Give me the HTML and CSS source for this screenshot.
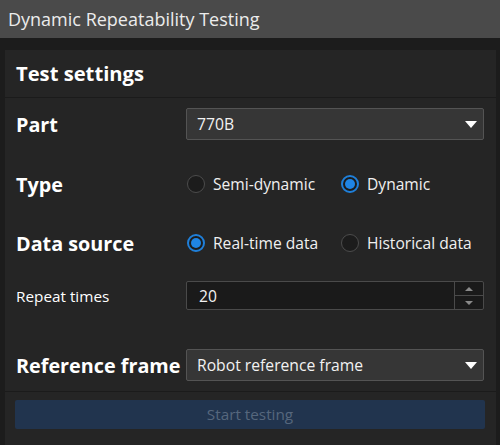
FILE: index.html
```html
<!DOCTYPE html>
<html lang="en">
<head>
<meta charset="utf-8">
<title>Dynamic Repeatability Testing</title>
<link rel="stylesheet" href="styles.css">
</head>
<body>
<div class="titlebar">Dynamic Repeatability Testing</div>
<div class="main">
  <div class="panel">
    <div class="panel-header">Test settings</div>
    <div class="form">
      <div class="row row-part">
        <div class="label big">Part</div>
        <div class="select">
          <span class="select-text">770B</span>
          <span class="caret"></span>
        </div>
      </div>
      <div class="row row-type">
        <div class="label big">Type</div>
        <div class="radios">
          <label class="radio"><span class="dot"></span><span class="radio-text">Semi-dynamic</span></label>
          <label class="radio checked"><span class="dot"></span><span class="radio-text">Dynamic</span></label>
        </div>
      </div>
      <div class="row row-source">
        <div class="label big">Data source</div>
        <div class="radios">
          <label class="radio checked"><span class="dot"></span><span class="radio-text">Real-time data</span></label>
          <label class="radio"><span class="dot"></span><span class="radio-text">Historical data</span></label>
        </div>
      </div>
      <div class="row row-repeat">
        <div class="label small">Repeat times</div>
        <div class="spin">
          <span class="spin-text">20</span>
          <div class="spin-buttons">
            <span class="spin-btn"><span class="tri-up"></span></span>
            <span class="spin-btn"><span class="tri-down"></span></span>
          </div>
        </div>
      </div>
      <div class="row row-frame">
        <div class="label big">Reference frame</div>
        <div class="select">
          <span class="select-text">Robot reference frame</span>
          <span class="caret"></span>
        </div>
      </div>
    </div>
    <div class="footer">
      <div class="start-btn">Start testing</div>
    </div>
  </div>
</div>
</body>
</html>
```

FILE: styles.css
```css
* { box-sizing: border-box; }

html, body {
  margin: 0;
  height: 100%;
}

body {
  background: #1c1c1c;
  font-family: "Open Sans", "Noto Sans", "Liberation Sans", sans-serif;
  color: #f0f0f0;
  overflow: hidden;
}

.titlebar {
  height: 38px;
  background: #4a4a4a;
  color: #ececec;
  font-size: 18px;
  line-height: 38px;
  padding-left: 8px;
}

.main {
  padding: 12px 4px 0 5px;
}

.panel {
  background: #252525;
  height: 395px;
}

.panel-header {
  height: 48px;
  border-bottom: 1px solid #1b1b1b;
  padding-left: 11px;
  font-weight: 700;
  font-size: 20.2px;
  line-height: 47px;
  color: #ffffff;
}

.form {
  padding: 10px 12px 10px 11px;
  display: flex;
  flex-direction: column;
}

.row {
  display: flex;
  align-items: center;
  justify-content: space-between;
}

.row-part { height: 32px; }
.row-type { height: 32px; margin-top: 28px; }
.row-source { height: 32px; margin-top: 27px; }
.row-repeat { height: 29px; margin-top: 22px; }
.row-frame { height: 32px; margin-top: 39px; }

.label { color: #ffffff; }
.label.big { font-size: 19.8px; font-weight: 700; }
.label.small { font-size: 15.3px; }

.select {
  width: 298px;
  height: 32px;
  background: #363636;
  border: 1px solid #545454;
  border-radius: 2px;
  display: flex;
  align-items: center;
  justify-content: space-between;
  padding: 0 6px 0 10px;
}

.select-text {
  font-size: 15.7px;
  color: #f2f2f2;
}

.caret {
  width: 0;
  height: 0;
  border-left: 6px solid transparent;
  border-right: 6px solid transparent;
  border-top: 7px solid #ffffff;
}

.radios {
  width: 298px;
  display: grid;
  grid-template-columns: 154px 1fr;
  padding-left: 1px;
}

.radio {
  display: flex;
  align-items: center;
  gap: 8px;
}

.dot {
  width: 18px;
  height: 18px;
  border-radius: 50%;
  border: 1.5px solid #4c4c4c;
  background: #1c1c1c;
  position: relative;
  flex: none;
}

.radio.checked .dot {
  border: 2px solid #1f7fd9;
}

.radio.checked .dot::after {
  content: "";
  position: absolute;
  left: 2px;
  top: 2px;
  width: 10px;
  height: 10px;
  border-radius: 50%;
  background: #1f85e5;
}

.radio-text {
  font-size: 15.6px;
  color: #f0f0f0;
}

.spin {
  width: 298px;
  height: 29px;
  background: #1a1a1a;
  border: 1px solid #4a4a4a;
  border-radius: 2px;
  display: flex;
  align-items: center;
  justify-content: space-between;
}

.spin-text {
  font-size: 15.6px;
  color: #f2f2f2;
  padding-left: 12px;
}

.spin-buttons {
  width: 29px;
  height: 100%;
  border-left: 1px solid #4a4a4a;
  display: flex;
  flex-direction: column;
}

.spin-btn {
  flex: 1;
  display: flex;
  align-items: center;
  justify-content: center;
}

.spin-btn + .spin-btn {
  border-top: 1px solid #4a4a4a;
}

.tri-up {
  border-left: 4px solid transparent;
  border-right: 4px solid transparent;
  border-bottom: 4px solid #8a8a8a;
}

.tri-down {
  border-left: 4px solid transparent;
  border-right: 4px solid transparent;
  border-top: 4px solid #8a8a8a;
}

.footer {
  border-top: 1px solid #1b1b1b;
  padding: 8px 11px 0 10px;
}

.start-btn {
  height: 29px;
  background: #21344e;
  border-radius: 2px;
  text-align: center;
  font-size: 15.3px;
  line-height: 29px;
  color: #56677d;
}
```
